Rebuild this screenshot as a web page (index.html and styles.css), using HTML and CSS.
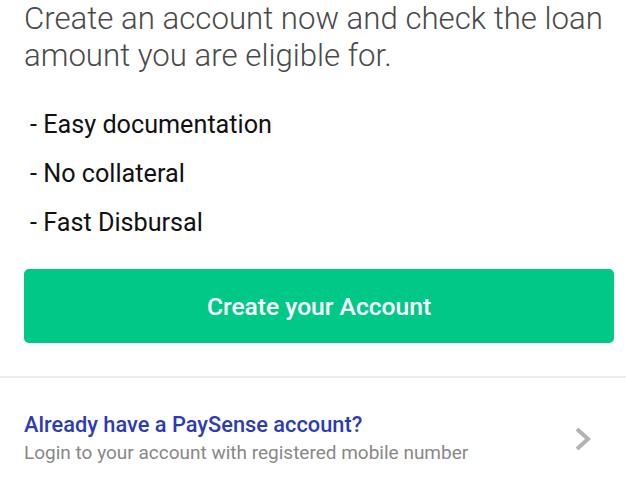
FILE: index.html
```html
<!DOCTYPE html>
<html lang="en">
<head>
    <meta charset="UTF-8">
    <meta name="viewport" content="width=device-width, initial-scale=1.0">
    <link rel="stylesheet" href="styles.css">
    <title>Create Account</title>
</head>
<body>
    <div class="intro">
        <h1 class="headline">Create an account now and check the loan amount you are eligible for.</h1>

        <ul class="perks">
            <li>- Easy documentation</li>
            <li>- No collateral</li>
            <li>- Fast Disbursal</li>
        </ul>

        <button class="create-btn">Create your Account</button>
    </div>

    <a class="login-row" href="#">
        <div class="login-text">
            <div class="login-title">Already have a PaySense account?</div>
            <div class="login-sub">Login to your account with registered mobile number</div>
        </div>
        <svg class="chevron" width="20" height="26" viewBox="0 0 20 26">
            <path d="M4 3 L15 13 L4 23" fill="none" stroke="#b3b3b3" stroke-width="4"/>
        </svg>
    </a>
</body>
</html>
```

FILE: styles.css
```css
body {
    margin: 0;
    background: #fff;
    font-family: Roboto, "Noto Sans", sans-serif;
}

.intro {
    padding: 0 12px 33px 24px;
    border-bottom: 2px solid #ececec;
}

.headline {
    margin: 0;
    font-size: 31.2px;
    font-weight: 300;
    line-height: 37px;
    color: #4a4a4a;
}

.perks {
    list-style: none;
    margin: 26px 0 0 6px;
    padding: 0;
}

.perks li {
    font-size: 25.2px;
    line-height: 49px;
    color: #111;
}

.create-btn {
    display: block;
    width: 100%;
    height: 74px;
    margin-top: 22px;
    border: none;
    border-radius: 5px;
    background: #00c988;
    color: #fff;
    font-family: Roboto, sans-serif;
    font-size: 24.6px;
    font-weight: 500;
}

.login-row {
    display: flex;
    align-items: center;
    padding: 33px 33px 0 24px;
    text-decoration: none;
}

.login-text {
    flex: 1;
}

.login-title {
    font-size: 21.8px;
    font-weight: 500;
    line-height: 28px;
    color: #2d3bb4;
}

.login-sub {
    font-size: 19px;
    line-height: 28px;
    color: #888;
}

.chevron {
    display: block;
}
```
